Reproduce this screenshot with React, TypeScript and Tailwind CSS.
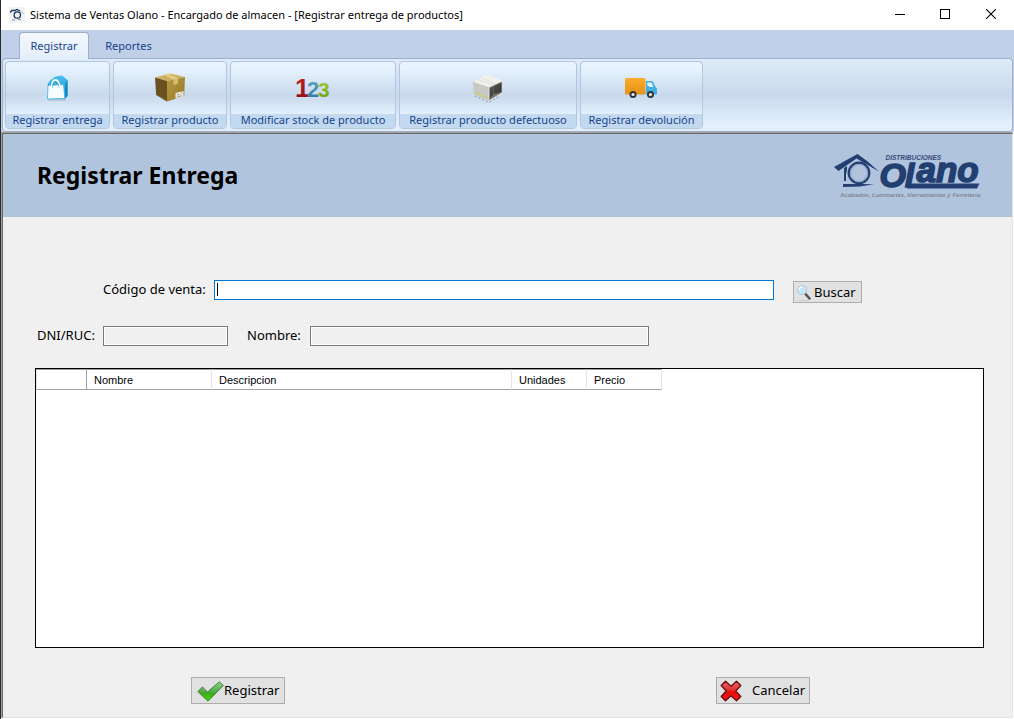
import React from "react";

function HouseMark() {
  return (
    <svg viewBox="0 0 16 16" className="size-4 bg-[#f3f3f3]" aria-hidden="true">
      <path d="M1 5.500 3 3.500h3l2-1 3 1.500" fill="none" stroke="#16365f" strokeWidth="1.300" />
      <path d="M11 4l3.600 2.800" stroke="#8aa0bd" strokeWidth="0.800" />
      <circle cx="8.300" cy="8" r="3.200" fill="none" stroke="#16365f" strokeWidth="1.300" />
      <path d="M3 13h3M9 12.600h3" stroke="#5d7596" strokeWidth="0.800" />
    </svg>
  );
}

function BagIcon() {
  return (
    <svg viewBox="0 0 24 26" className="h-[26px] w-6" aria-hidden="true">
      <defs>
        <linearGradient id="bag" x1="0" y1="0" x2="0" y2="1">
          <stop offset="0" stopColor="#4bbcec" />
          <stop offset="1" stopColor="#159bd7" />
        </linearGradient>
      </defs>
      <path d="M2.500 9 5 5.500 10.500 1.500 17 .6 22.500 5 22.500 21 19.500 24H7z" fill="url(#bag)" />
      <path d="M20.500 8l2-3v16l-3 3z" fill="#0d87c2" />
      <path d="M3 10.500 18.500 9.500l1.400 14-17.400.5z" fill="#f7fcff" stroke="#35aee3" strokeWidth=".8" />
      <path d="M6.800 13C5.800 2.500 13.800 2 14.800 12.500" fill="none" stroke="#fff" strokeWidth="1.600" />
      <path d="M7.600 13.200C6.800 4.500 13 4 14 12.800" fill="none" stroke="#4a9dc6" strokeWidth=".6" />
      <path d="M3 25h18" stroke="#7a97b4" strokeWidth="1" opacity=".6" />
    </svg>
  );
}

function ParcelIcon() {
  return (
    <svg viewBox="0 0 30 30" className="size-[30px]" aria-hidden="true">
      <defs>
        <linearGradient id="parcel" x1="0" y1="0" x2="1" y2="1">
          <stop offset="0" stopColor="#b89a45" />
          <stop offset="1" stopColor="#927826" />
        </linearGradient>
      </defs>
      <path d="M0 4.500 15 .5 30 4 12 8z" fill="#cdb063" />
      <path d="M0 4.500 12 8v20.500L1.200 22z" fill="#69521f" />
      <path d="M12 8 30 4l-.8 19L12 28.500z" fill="url(#parcel)" />
      <path d="M9 2.100 14 .8 23 5.500l-4.500 1.100z" fill="#e5cc83" />
      <path d="M18.500 6.600v5l2 .3 1-1.300 1.500.4V5.500z" fill="#d9bd6c" />
      <path d="M20.500 20 28.600 18v5.600l-8.100 2.200z" fill="#eee9df" />
      <path d="M22 22l2.500-.7M22 24l5-1.300M26 20.300l1.500-.4" stroke="#99928b" strokeWidth=".9" />
    </svg>
  );
}

function NumbersIcon() {
  return (
    <svg viewBox="0 0 34 34" className="h-[34px] w-[34px] font-['Liberation_Sans']" fontWeight="700" aria-hidden="true">
      <defs>
        <linearGradient id="n1" x1="0" y1="0" x2="0" y2="1">
          <stop offset="0" stopColor="#c92222" />
          <stop offset="1" stopColor="#8c0d15" />
        </linearGradient>
        <linearGradient id="n2" x1="0" y1="0" x2="0" y2="1">
          <stop offset="0" stopColor="#69adcc" />
          <stop offset="1" stopColor="#286f9b" />
        </linearGradient>
        <linearGradient id="n3" x1="0" y1="0" x2="0" y2="1">
          <stop offset="0" stopColor="#a7cf2e" />
          <stop offset="1" stopColor="#669e19" />
        </linearGradient>
      </defs>
      <text x="-1" y="26" fontSize="26" fill="url(#n1)">1</text>
      <text x="11" y="26" fontSize="22" fill="url(#n2)">2</text>
      <text x="22" y="26" fontSize="21" fill="url(#n3)">3</text>
    </svg>
  );
}

function OpenBoxIcon() {
  return (
    <svg viewBox="0 0 32 30" className="h-[30px] w-8" aria-hidden="true">
      <defs>
        <linearGradient id="hollow" x1="0" y1="0" x2="1" y2="1">
          <stop offset="0" stopColor="#5a5a5a" />
          <stop offset="1" stopColor="#2d2d2d" />
        </linearGradient>
      </defs>
      <path d="M1 9 14.500 1.200 30.500 7.500 16.500 14z" fill="#f1f0eb" />
      <path d="M6 6.500 21 12M9 4.800l15 6" stroke="#dddcd7" strokeWidth=".8" />
      <path d="M1 9l15.500 5v14.500L2 21.500z" fill="#c9c8c2" />
      <path d="M1.800 18.500 16.500 24.800v1.300L1.900 20z" fill="#c5cf72" />
      <path d="M16.500 14 30.500 7.500V20L16.500 28.500z" fill="#dcdbd7" />
      <path d="M17.500 14.800 29.700 9v10.300L17.500 26.800z" fill="url(#hollow)" />
      <path d="M17.500 25.800l4-4.300 8.200-2.200-12.200 7.500z" fill="#77736d" />
      <path d="M21.500 13.500v8l8.200-2.200" stroke="#777" strokeWidth=".5" fill="none" />
      <path d="M3 23l13.500 6.500L28 23" fill="none" stroke="#8190a3" strokeWidth=".8" strokeDasharray="2 2" />
    </svg>
  );
}

function TruckIcon() {
  return (
    <svg viewBox="0 0 32 22" className="h-[22px] w-8" aria-hidden="true">
      <defs>
        <linearGradient id="cargo" x1="0" y1="0" x2="0" y2="1">
          <stop offset="0" stopColor="#fbaa2b" />
          <stop offset="1" stopColor="#e59217" />
        </linearGradient>
      </defs>
      <rect x="0" y="1" width="20.500" height="16.500" rx="1.500" fill="url(#cargo)" />
      <path d="M21 4h5c1 0 1.800.5 2.400 1.400l2.300 4.600 1.300 1.500V16.500c0 .6-.4 1-1 1H21z" fill="#41aee5" />
      <path d="M22.300 5.500h3.200c.7 0 1.200.3 1.500 1l1.500 3.500h-3.500l-2.700-1.500z" fill="#dff4fd" />
      <circle cx="8" cy="17.500" r="3.500" fill="#333" />
      <circle cx="8" cy="17.500" r="1.600" fill="#eee" />
      <circle cx="25.500" cy="17.500" r="3.500" fill="#333" />
      <circle cx="25.500" cy="17.500" r="1.600" fill="#eee" />
    </svg>
  );
}

function Logo() {
  return (
    <svg
      viewBox="0 0 150 48"
      className="h-12 w-[150px] font-['Liberation_Sans']"
      fontWeight="700"
      fontStyle="italic"
      role="img"
      aria-label="Distribuciones Olano"
    >
      <g fill="#233f72">
        <path d="M0 15 23.500 2 33 9 45 19.500 22.500 6.500 4.500 19z" />
        <path d="M10 16l3-2v4l-1 4v7h-2z" />
        <path d="M9 35v-3h17l14 .3-14 2.200z" />
        <circle cx="25" cy="21" r="10.300" fill="#b0c4de" stroke="#233f72" strokeWidth="2.200" />
        <circle cx="25" cy="21" r="8.500" fill="none" stroke="#8ca0c0" strokeWidth="1" />
        <text x="51.500" y="8" fontSize="6.500" fill="#354d77">DISTRIBUCIONES</text>
        <g stroke="#233f72" strokeWidth="1.600">
          <text x="45.500" y="35" fontSize="34">O</text>
          <text x="71" y="35" fontSize="33">l</text>
          <text x="82.500" y="29.500" fontSize="35">ano</text>
        </g>
        <path d="M74 31.500h71.500l-2.500 5H73z" />
      </g>
      <text x="6" y="44.500" fontSize="6" fill="#85888f">Acabados, Luminarias, Herramientas y Ferreteria.</text>
    </svg>
  );
}

function SearchIcon() {
  return (
    <svg viewBox="0 0 16 17" className="h-[17px] w-4" aria-hidden="true">
      <path d="M3 15.500h9" stroke="#c9c9c9" strokeWidth="1" />
      <path d="M9.500 9 13.500 13.500" stroke="#555" strokeWidth="2.600" strokeLinecap="round" />
      <circle cx="6" cy="5" r="4.600" fill="#c3e7fa" stroke="#b9c6d0" strokeWidth="1" />
      <path d="M3 5c0-2 1.500-3 3.500-3" fill="none" stroke="#fff" strokeWidth="1.300" />
    </svg>
  );
}

function CheckIcon() {
  return (
    <svg viewBox="0 0 27 21" className="h-[21px] w-[27px]" aria-hidden="true">
      <defs>
        <linearGradient id="tick" x1="0" y1="0" x2="0" y2="1">
          <stop offset="0" stopColor="#8fce8c" />
          <stop offset=".5" stopColor="#55ad48" />
          <stop offset=".6" stopColor="#3baa1d" />
          <stop offset="1" stopColor="#4bdc0d" />
        </linearGradient>
      </defs>
      <path d="M.8 10.500 5.500 6l5 5L22.300.8 26.300 4.500 11 20.200z" fill="url(#tick)" stroke="#317c2c" strokeWidth=".9" strokeLinejoin="round" />
    </svg>
  );
}

function CrossIcon() {
  return (
    <svg viewBox="0 0 22 22" className="size-[22px]" aria-hidden="true">
      <defs>
        <linearGradient id="cross" x1="0" y1="0" x2="0" y2="1">
          <stop offset="0" stopColor="#f36a6a" />
          <stop offset=".45" stopColor="#dd3030" />
          <stop offset=".55" stopColor="#e60d0d" />
          <stop offset="1" stopColor="#ff1414" />
        </linearGradient>
      </defs>
      <path d="M5.500 1.200 11 6.200l5.500-5 4.300 4.300-5 5.500 5 5.500-4.300 4.300L11 15.800l-5.500 5-4.300-4.300 5-5.500-5-5.500z" fill="url(#cross)" stroke="#681010" strokeWidth="1.300" strokeLinejoin="round" />
    </svg>
  );
}

const ribbon = [
  { label: "Registrar entrega", width: "w-[105px]", icon: <BagIcon /> },
  { label: "Registrar producto", width: "w-[114px]", icon: <ParcelIcon /> },
  { label: "Modificar stock de producto", width: "w-[166px]", icon: <NumbersIcon /> },
  { label: "Registrar producto defectuoso", width: "w-[178px]", icon: <OpenBoxIcon /> },
  { label: "Registrar devolución", width: "w-[123px]", icon: <TruckIcon /> },
];

const columns = [
  { label: "Nombre", width: "w-[125px]" },
  { label: "Descripcion", width: "w-[300px]" },
  { label: "Unidades", width: "w-[75px]" },
  { label: "Precio", width: "w-[75px]" },
];

const readOnlyBox = "h-5 border border-[#7a7a7a] bg-[#f0f0f0] px-1 text-[13px] shadow-[inset_0_0_0_1px_#ffffff] outline-none";
const pushButton = "flex items-center border border-[#adadad] bg-[#e1e1e1] whitespace-nowrap text-[13px]";

export default function App() {
  return (
    <div className="flex min-h-screen flex-col border-l border-[#2b2b2b] bg-white font-['Noto_Sans',sans-serif] text-black">
      <header className="flex h-[30px] shrink-0 items-center pl-2">
        <HouseMark />
        <span className="ml-[5px] text-[11px] whitespace-nowrap">
          Sistema de Ventas Olano - Encargado de almacen - [Registrar entrega de productos]
        </span>
        <div className="ml-auto flex h-full pb-0.5">
          <button type="button" aria-label="Minimizar" className="flex w-[46px] items-center justify-center">
            <svg viewBox="0 0 10 10" className="size-[10px]" shapeRendering="crispEdges"><path d="M0 5.500h10" stroke="#000" /></svg>
          </button>
          <button type="button" aria-label="Maximizar" className="flex w-11 items-center justify-center">
            <svg viewBox="0 0 10 10" className="size-[10px]" shapeRendering="crispEdges"><path d="M.5.500h9v9h-9z" fill="none" stroke="#000" /></svg>
          </button>
          <button type="button" aria-label="Cerrar" className="flex w-[47px] items-center justify-center">
            <svg viewBox="0 0 10 10" className="size-[10px]"><path d="M0 0l10 10M10 0 0 10" stroke="#000" strokeWidth="1.100" /></svg>
          </button>
        </div>
      </header>

      <div className="flex shrink-0 flex-col bg-[#bfd0e8] pt-0.5">
        <div className="flex h-[26px] pl-[18px] text-[11px] text-[#15428b]">
          <button type="button" className="z-10 -mb-px w-[70px] rounded-t border border-b-0 border-[#9ab0cd] bg-linear-to-b from-[#f4f8fd] to-[#e4eefb]">
            Registrar
          </button>
          <button type="button" className="w-[79px] pt-0.5">Reportes</button>
        </div>
        <nav className="mx-px flex h-[74px] gap-[3px] rounded border border-[#9ab0cd] bg-linear-to-b from-[#dfebf8] from-0% via-[#c9d9ec] via-50% to-[#e3effd] to-90% p-0.5">
          {ribbon.map((item) => (
            <button
              key={item.label}
              type="button"
              className={`${item.width} flex h-[68px] shrink-0 flex-col overflow-hidden rounded border border-[#b2c6e1] bg-linear-to-b from-[#e7f3fe] from-10% via-[#c8d9ec] via-50% to-[#e4f0fd] to-80%`}
            >
              <span className="flex h-[52px] w-full shrink-0 items-center justify-center pr-px">{item.icon}</span>
              <span className="h-[15px] w-full bg-[#c3d9f0] text-[11px] leading-[11px] whitespace-nowrap text-[#15428b]">{item.label}</span>
            </button>
          ))}
        </nav>
      </div>

      <main className="mr-px mb-px flex flex-1 flex-col border-t border-l border-[#a0a0a0]">
        <div className="flex flex-1 flex-col border border-t-[#696969] border-r-[#e3e3e3] border-b-[#e3e3e3] border-l-[#696969] bg-[#f0f0f0]">
          <div className="flex h-[83px] shrink-0 items-center justify-between bg-[#b0c4de] pr-7 pl-[34px]">
            <h1 className="pb-0.5 text-[23px] leading-7 font-bold">Registrar Entrega</h1>
            <Logo />
          </div>

          <form className="flex flex-1 flex-col pt-[63px] pr-7 pb-[13px] pl-8" onSubmit={(e) => e.preventDefault()}>
            <div className="flex items-start pr-[122px] pl-[68px]">
              <label htmlFor="codigo" className="w-[111px] text-[13px] leading-[18px]">Código de venta:</label>
              <div className="relative flex-1">
                <input id="codigo" type="text" className="block h-5 w-full border border-[#0078d7] bg-white px-1 text-[13px] caret-transparent outline-none" />
                <span className="absolute top-[3px] left-[3px] h-[13px] w-px bg-black" />
              </div>
              <button type="button" className={`${pushButton} mt-px ml-[19px] h-[22px] w-[69px] gap-0.5 pt-0.5 pl-0.5`}>
                <SearchIcon />
                Buscar
              </button>
            </div>

            <div className="mt-[23px] flex items-start pl-0.5 text-[13px] leading-[18px]">
              <label htmlFor="dni" className="w-[66px]">DNI/RUC:</label>
              <input id="dni" type="text" readOnly className={`${readOnlyBox} w-[125px]`} />
              <label htmlFor="nombre" className="ml-[19px] w-[63px]">Nombre:</label>
              <input id="nombre" type="text" readOnly className={`${readOnlyBox} w-[339px]`} />
            </div>

            <div className="mt-[22px] flex-1 border border-black bg-white">
              <table className="table-fixed border-separate border-spacing-0 font-['Liberation_Sans',sans-serif] text-[11px]">
                <thead>
                  <tr className="h-[21px] text-left">
                    <td className="w-[51px] border border-t-[#a0a0a0] border-r-[#a0a0a0] border-b-[#a0a0a0] border-l-[#e5e5e5] p-0" />
                    {columns.map((c) => (
                      <th key={c.label} className={`${c.width} border-t border-r border-b border-t-[#a0a0a0] border-r-[#e5e5e5] border-b-[#a0a0a0] py-0 pr-0 pl-[7px] leading-4 font-normal`}>
                        {c.label}
                      </th>
                    ))}
                  </tr>
                </thead>
              </table>
            </div>

            <div className="mt-[29px] flex justify-between pr-[174px] pl-[156px]">
              <button type="submit" className={`${pushButton} h-[27px] w-[94px] pt-px pl-[5px]`}>
                <CheckIcon />
                Registrar
              </button>
              <button type="button" className={`${pushButton} h-[27px] w-[94px] gap-[10px] pt-px pl-[3px]`}>
                <CrossIcon />
                Cancelar
              </button>
            </div>
          </form>
        </div>
      </main>
    </div>
  );
}
